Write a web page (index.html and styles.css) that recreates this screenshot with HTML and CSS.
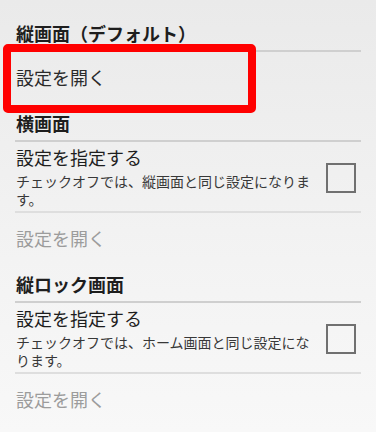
FILE: index.html
```html
<!DOCTYPE html>
<html lang="ja">
<head>
<meta charset="utf-8">
<link rel="stylesheet" href="styles.css">
</head>
<body>
<div class="screen">
  <div class="list">
    <div class="cat">縦画面（デフォルト）</div>
    <div class="open highlight-anchor">設定を開く<span class="highlight"></span></div>

    <div class="cat">横画面</div>
    <div class="item">
      <div class="texts">
        <div class="title">設定を指定する</div>
        <div class="desc">チェックオフでは、縦画面と同じ設定になります。</div>
      </div>
      <div class="check"></div>
    </div>
    <div class="open disabled">設定を開く</div>

    <div class="cat">縦ロック画面</div>
    <div class="item">
      <div class="texts">
        <div class="title">設定を指定する</div>
        <div class="desc">チェックオフでは、ホーム画面と同じ設定になります。</div>
      </div>
      <div class="check"></div>
    </div>
    <div class="open disabled">設定を開く</div>
  </div>
</div>
</body>
</html>
```

FILE: styles.css
```css
html, body {
  margin: 0;
  padding: 0;
}
body {
  width: 376px;
  height: 432px;
  overflow: hidden;
  font-family: "Noto Sans CJK JP", "Noto Sans", sans-serif;
  background: linear-gradient(to bottom, #eaeaea 0%, #f3f3f3 60%, #f8f8f8 100%);
}
.screen {
  position: relative;
  height: 432px;
  padding-top: 11px;
  box-sizing: border-box;
}
.list {
  margin: 0 15px;
  display: flex;
  flex-direction: column;
}
.cat {
  padding: 11px 0 6px 1px;
  font-size: 18px;
  line-height: 22px;
  font-weight: bold;
  color: #1e1e1e;
  border-bottom: 2px solid #cfcfcf;
}
.open {
  padding: 13px 0 12px 1px;
  font-size: 18px;
  line-height: 24px;
  color: #2a2a2a;
}
.open.disabled {
  color: #9c9c9c;
}
.highlight-anchor {
  position: relative;
}
.highlight {
  position: absolute;
  left: -12px;
  top: -8px;
  width: 253px;
  height: 69px;
  box-sizing: border-box;
  border: 8px solid #ff0000;
  border-radius: 5px;
}
.item {
  display: flex;
  align-items: center;
  gap: 12px;
  padding: 5px 5px 3px 1px;
  border-bottom: 2px solid #dedede;
}
.texts {
  flex: 1;
  min-width: 0;
}
.title {
  font-size: 18px;
  line-height: 21px;
  color: #1e1e1e;
}
.desc {
  margin-top: 4px;
  font-size: 14px;
  line-height: 18px;
  color: #383838;
}
.check {
  width: 30px;
  height: 30px;
  box-sizing: border-box;
  border: 2px solid #707070;
  flex: none;
}
```
